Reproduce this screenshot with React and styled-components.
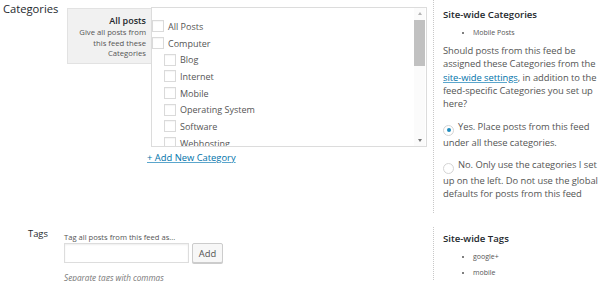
import React from 'react';
import styled, { createGlobalStyle } from 'styled-components';

const GlobalStyle = createGlobalStyle`
  html, body {
    margin: 0;
    padding: 0;
    background: #fff;
  }
  body {
    font-family: "Open Sans", "Liberation Sans", sans-serif;
    color: #444;
    overflow: hidden;
  }
`;

const Page = styled.div`
  width: 600px;
  height: 281px;
  overflow: hidden;
`;

const Section = styled.div`
  display: grid;
  grid-template-columns: 64px 369px 1fr;
  margin-top: ${p => p.$top || 0}px;
`;

const Label = styled.div`
  padding-left: ${p => p.$indent}px;
  padding-top: ${p => p.$top}px;
  font-size: ${p => p.$size}px;
  line-height: 13px;
  color: #23282d;
`;

const Field = styled.div`
  display: flex;
  flex-direction: column;
  padding-top: ${p => p.$top || 0}px;
`;

const Side = styled.div`
  border-left: 1px dotted #c8c8c8;
  padding: ${p => p.$pad};
`;

/* ---- categories field ---- */

const CatRow = styled.div`
  display: flex;
  align-items: flex-start;
  margin-left: 3px;
`;

const AllPostsBox = styled.div`
  box-sizing: border-box;
  width: 84px;
  margin-top: 1px;
  padding: 5px 5px 4px 4px;
  background: #f1f1f1;
  border: 1px solid #e2e2e2;
  border-right: none;
  text-align: right;
`;

const BoxTitle = styled.div`
  font-size: 9px;
  font-weight: 600;
  line-height: 13px;
  color: #23282d;
`;

const BoxHint = styled.div`
  font-size: 7.7px;
  line-height: 10.6px;
  color: #555;
`;

const Checklist = styled.div`
  box-sizing: border-box;
  display: flex;
  width: 276px;
  height: 140px;
  border: 1px solid #dcdcdc;
  background: #fff;
`;

const ListBody = styled.div`
  flex: 1;
  overflow: hidden;
  padding-top: 10px;
`;

const Item = styled.label`
  display: flex;
  align-items: center;
  height: 16.7px;
  padding-left: ${p => (p.$nested ? 12 : 0)}px;
  font-size: 9px;
  color: #555;
`;

const Box = styled.span`
  box-sizing: border-box;
  width: 12px;
  height: 12px;
  margin-right: 4px;
  flex: none;
  border: 1px solid #dadada;
  background: #fff;
  box-shadow: inset 0 1px 1px rgba(0, 0, 0, 0.04);
`;

const Scrollbar = styled.div`
  width: 11px;
  margin-right: 1px;
  display: flex;
  flex-direction: column;
  align-items: center;
  background: #fbfbfb;
`;

const Arrow = styled.span`
  height: 11px;
  display: flex;
  align-items: center;
  justify-content: center;
  flex: none;
  &::before {
    content: "";
    border-left: 2.5px solid transparent;
    border-right: 2.5px solid transparent;
    ${p => (p.$down ? 'border-top: 3px solid #777;' : 'border-bottom: 3px solid #b5b5b5;')}
  }
`;

const Thumb = styled.span`
  width: 11px;
  height: 46px;
  margin-top: 1px;
  background: #c1c1c1;
`;

const Track = styled.span`
  flex: 1;
`;

const AddLink = styled.a`
  align-self: flex-start;
  margin: 4px 0 0 83px;
  font-size: 9.4px;
  line-height: 13px;
  color: #0073aa;
  text-decoration: underline;
  text-decoration-color: #5ba6cc;
`;

/* ---- side panel ---- */

const SideTitle = styled.h4`
  margin: 0;
  font-size: 9.6px;
  font-weight: 600;
  line-height: 13px;
  color: #23282d;
`;

const Bullets = styled.ul`
  margin: ${p => p.$mt}px 0 0;
  padding-left: 30px;
  font-size: 7px;
  line-height: 10px;
  color: #555;
  li {
    margin-bottom: ${p => p.$gap}px;
  }
  li::marker {
    font-size: 6px;
  }
`;

const Para = styled.p`
  margin: 0;
  font-size: 9.4px;
  line-height: 13.3px;
  letter-spacing: -0.05px;
  color: #555;
  a {
    color: #0073aa;
    text-decoration: underline;
    text-decoration-color: #5ba6cc;
  }
`;

const Choice = styled(Para)`
  margin-top: ${p => p.$mt}px;
`;

const Radio = styled.span`
  box-sizing: border-box;
  display: inline-flex;
  align-items: center;
  justify-content: center;
  width: 11px;
  height: 11px;
  margin-right: 4px;
  vertical-align: -2px;
  border: 1px solid #d4d4d4;
  border-radius: 50%;
  background: #fff;
  &::after {
    content: "";
    width: 4px;
    height: 4px;
    border-radius: 50%;
    background: ${p => (p.$checked ? '#1e8cbe' : 'transparent')};
  }
`;

/* ---- tags field ---- */

const SmallText = styled.div`
  font-size: ${p => p.$size || 7.6}px;
  line-height: 10px;
  color: ${p => p.$muted ? '#777' : '#555'};
  font-style: ${p => p.$italic ? 'italic' : 'normal'};
  margin-top: ${p => p.$mt || 0}px;
`;

const TagRow = styled.div`
  display: flex;
  gap: 3px;
  margin-top: 1px;
`;

const TagInput = styled.input`
  box-sizing: border-box;
  width: 125px;
  height: 20px;
  border: 1px solid #ddd;
  box-shadow: inset 0 1px 2px rgba(0, 0, 0, 0.07);
  outline: none;
`;

const Button = styled.button`
  box-sizing: border-box;
  height: 20px;
  width: 31px;
  padding: 0;
  border: 1px solid #ccc;
  border-radius: 2px;
  background: #f7f7f7;
  box-shadow: 0 1px 0 #ccc;
  font-family: "Open Sans", "Liberation Sans", sans-serif;
  font-size: 9.4px;
  color: #555;
`;

const cats = [
  { name: 'All Posts' },
  { name: 'Computer' },
  { name: 'Blog', nested: true },
  { name: 'Internet', nested: true },
  { name: 'Mobile', nested: true },
  { name: 'Operating System', nested: true },
  { name: 'Software', nested: true },
  { name: 'Webhosting', nested: true },
];

export default function App() {
  return (
    <Page>
      <GlobalStyle />
      <Section>
        <Label $indent={3} $top={2} $size={11.2}>Categories</Label>
        <Field $top={7}>
          <CatRow>
            <AllPostsBox>
              <BoxTitle>All posts</BoxTitle>
              <BoxHint>Give all posts from this feed these Categories</BoxHint>
            </AllPostsBox>
            <Checklist>
              <ListBody>
                {cats.map(c => (
                  <Item key={c.name} $nested={c.nested}>
                    <Box />
                    {c.name}
                  </Item>
                ))}
              </ListBody>
              <Scrollbar>
                <Arrow />
                <Thumb />
                <Track />
                <Arrow $down />
              </Scrollbar>
            </Checklist>
          </CatRow>
          <AddLink href="#">+ Add New Category</AddLink>
        </Field>
        <Side $pad="8px 0 13px 9px">
          <SideTitle>Site-wide Categories</SideTitle>
          <Bullets $mt={7} $gap={6}>
            <li>Mobile Posts</li>
          </Bullets>
          <Para>
            Should posts from this feed be assigned these Categories from the{' '}
            <a href="#">site-wide settings</a>, in addition to the feed-specific
            Categories you set up here?
          </Para>
          <Choice $mt={10}>
            <Radio $checked />Yes. Place posts from this feed under all these categories.
          </Choice>
          <Choice $mt={9}>
            <Radio />No. Only use the categories I set up on the left. Do not use the global defaults for posts from this feed
          </Choice>
        </Side>
      </Section>
      <Section $top={14}>
        <Label $indent={28} $top={0} $size={9.4}>Tags</Label>
        <Field $top={5}>
          <SmallText>Tag all posts from this feed as...</SmallText>
          <TagRow>
            <TagInput />
            <Button>Add</Button>
          </TagRow>
          <SmallText $italic $muted $mt={10} $size={8.2}>Separate tags with commas</SmallText>
        </Field>
        <Side $pad="5px 0 0 9px">
          <SideTitle>Site-wide Tags</SideTitle>
          <Bullets $mt={7} $gap={6}>
            <li>google+</li>
            <li>mobile</li>
          </Bullets>
        </Side>
      </Section>
    </Page>
  );
}
